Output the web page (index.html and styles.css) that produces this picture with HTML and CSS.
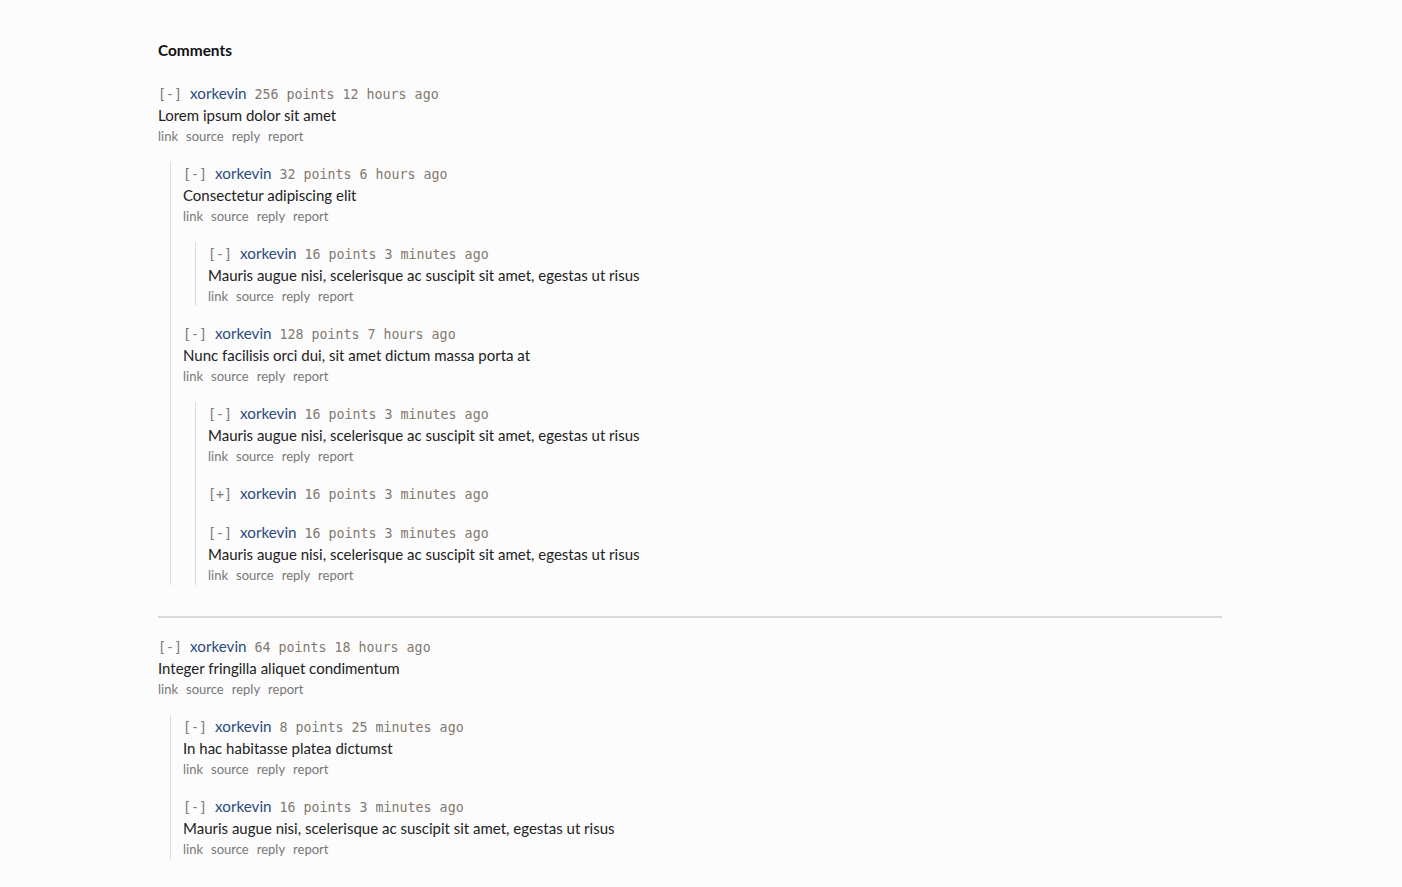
FILE: index.html
```html
<!DOCTYPE html>
<html>
<head>
<meta charset="utf-8">
<link rel="stylesheet" href="styles.css">
</head>
<body>
<div class="page">
  <h2 class="title">Comments</h2>

  <div class="thread">
    <div class="comment">
      <div class="meta"><span class="toggle">[-]</span> <a class="user">xorkevin</a> <span class="info">256 points 12 hours ago</span></div>
      <div class="body">Lorem ipsum dolor sit amet</div>
      <div class="actions"><a>link</a><a>source</a><a>reply</a><a>report</a></div>
      <div class="children">
        <div class="comment">
          <div class="meta"><span class="toggle">[-]</span> <a class="user">xorkevin</a> <span class="info">32 points 6 hours ago</span></div>
          <div class="body">Consectetur adipiscing elit</div>
          <div class="actions"><a>link</a><a>source</a><a>reply</a><a>report</a></div>
          <div class="children">
            <div class="comment">
              <div class="meta"><span class="toggle">[-]</span> <a class="user">xorkevin</a> <span class="info">16 points 3 minutes ago</span></div>
              <div class="body">Mauris augue nisi, scelerisque ac suscipit sit amet, egestas ut risus</div>
              <div class="actions"><a>link</a><a>source</a><a>reply</a><a>report</a></div>
            </div>
          </div>
        </div>
        <div class="comment">
          <div class="meta"><span class="toggle">[-]</span> <a class="user">xorkevin</a> <span class="info">128 points 7 hours ago</span></div>
          <div class="body">Nunc facilisis orci dui, sit amet dictum massa porta at</div>
          <div class="actions"><a>link</a><a>source</a><a>reply</a><a>report</a></div>
          <div class="children">
            <div class="comment">
              <div class="meta"><span class="toggle">[-]</span> <a class="user">xorkevin</a> <span class="info">16 points 3 minutes ago</span></div>
              <div class="body">Mauris augue nisi, scelerisque ac suscipit sit amet, egestas ut risus</div>
              <div class="actions"><a>link</a><a>source</a><a>reply</a><a>report</a></div>
            </div>
            <div class="comment collapsed">
              <div class="meta"><span class="toggle">[+]</span> <a class="user">xorkevin</a> <span class="info">16 points 3 minutes ago</span></div>
            </div>
            <div class="comment">
              <div class="meta"><span class="toggle">[-]</span> <a class="user">xorkevin</a> <span class="info">16 points 3 minutes ago</span></div>
              <div class="body">Mauris augue nisi, scelerisque ac suscipit sit amet, egestas ut risus</div>
              <div class="actions"><a>link</a><a>source</a><a>reply</a><a>report</a></div>
            </div>
          </div>
        </div>
      </div>
    </div>
  </div>

  <hr class="divider">

  <div class="thread">
    <div class="comment">
      <div class="meta"><span class="toggle">[-]</span> <a class="user">xorkevin</a> <span class="info">64 points 18 hours ago</span></div>
      <div class="body">Integer fringilla aliquet condimentum</div>
      <div class="actions"><a>link</a><a>source</a><a>reply</a><a>report</a></div>
      <div class="children">
        <div class="comment">
          <div class="meta"><span class="toggle">[-]</span> <a class="user">xorkevin</a> <span class="info">8 points 25 minutes ago</span></div>
          <div class="body">In hac habitasse platea dictumst</div>
          <div class="actions"><a>link</a><a>source</a><a>reply</a><a>report</a></div>
        </div>
        <div class="comment">
          <div class="meta"><span class="toggle">[-]</span> <a class="user">xorkevin</a> <span class="info">16 points 3 minutes ago</span></div>
          <div class="body">Mauris augue nisi, scelerisque ac suscipit sit amet, egestas ut risus</div>
          <div class="actions"><a>link</a><a>source</a><a>reply</a><a>report</a></div>
        </div>
      </div>
    </div>
  </div>
</div>
</body>
</html>
```

FILE: styles.css
```css
html, body {
  margin: 0;
  padding: 0;
  background: #fcfcfc;
}
body {
  font-family: Lato, "Liberation Sans", sans-serif;
  color: #222;
}
.page {
  width: 1064px;
  padding: 40px 0 0 158px;
}
.title {
  margin: 0 0 22px 0;
  font-size: 15.4px;
  line-height: 20px;
  font-weight: 700;
  color: #111;
}
.comment + .comment {
  margin-top: 16px;
}
.comment.collapsed {
  padding-bottom: 1px;
}
.meta {
  font-family: "DejaVu Sans Mono", "Liberation Mono", monospace;
  font-size: 13.3px;
  line-height: 22px;
  height: 22px;
  white-space: nowrap;
  color: #7a7a7a;
}
.info {
  color: #83786f;
}
.user {
  font-family: Lato, "Liberation Sans", sans-serif;
  font-size: 15.2px;
  color: #2b4a7e;
}
.body {
  font-size: 15px;
  line-height: 21px;
  color: #222;
  position: relative;
  top: 1px;
}
.actions {
  font-size: 13px;
  line-height: 21px;
  color: #777;
  display: flex;
  gap: 8px;
  position: relative;
  top: 1px;
}
.children {
  margin: 16px 0 0 12px;
  border-left: 1px solid #dcdcdc;
  padding-left: 12px;
}
.divider {
  margin: 31px 0 17px 0;
  border: 0;
  height: 2px;
  background: #dadada;
}
```
